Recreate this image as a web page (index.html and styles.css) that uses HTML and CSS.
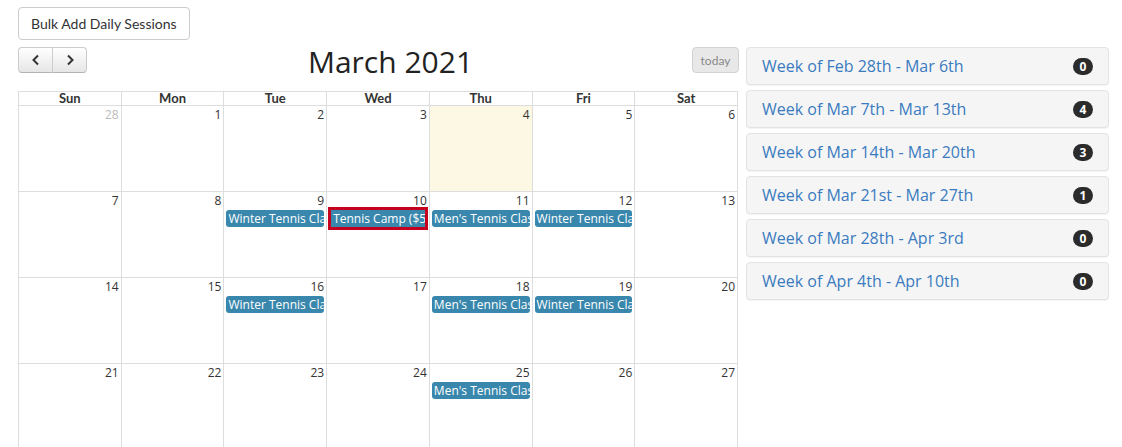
FILE: index.html
```html
<!DOCTYPE html>
<html lang="en">

<head>
    <meta charset="utf-8">
    <meta name="viewport" content="width=device-width, initial-scale=1.0">
    <title>Sessions</title>

    <link rel="stylesheet" href="styles.css">
</head>

<body>
    <div class="page">
        <button class="btn-bulk">Bulk Add Daily Sessions</button>

        <div class="layout">
            <section class="calendar">
                <div class="toolbar">
                    <div class="nav-group">
                        <button class="nav-btn" aria-label="prev">
                            <svg width="10" height="12" viewBox="0 0 10 12"><polyline points="7,1.5 2.5,6 7,10.5" fill="none" stroke="#333" stroke-width="2"/></svg>
                        </button>
                        <button class="nav-btn" aria-label="next">
                            <svg width="10" height="12" viewBox="0 0 10 12"><polyline points="3,1.5 7.5,6 3,10.5" fill="none" stroke="#333" stroke-width="2"/></svg>
                        </button>
                    </div>
                    <h2 class="title">March 2021</h2>
                    <button class="btn-today" disabled>today</button>
                </div>

                <div class="grid head">
                    <div>Sun</div><div>Mon</div><div>Tue</div><div>Wed</div><div>Thu</div><div>Fri</div><div>Sat</div>
                </div>

                <div class="grid days">
                    <div class="day other"><span class="num">28</span></div>
                    <div class="day"><span class="num">1</span></div>
                    <div class="day"><span class="num">2</span></div>
                    <div class="day"><span class="num">3</span></div>
                    <div class="day today"><span class="num">4</span></div>
                    <div class="day"><span class="num">5</span></div>
                    <div class="day"><span class="num">6</span></div>

                    <div class="day"><span class="num">7</span></div>
                    <div class="day"><span class="num">8</span></div>
                    <div class="day"><span class="num">9</span><a class="event">Winter Tennis Class</a></div>
                    <div class="day"><span class="num">10</span><a class="event picked">Tennis Camp ($50)</a></div>
                    <div class="day"><span class="num">11</span><a class="event">Men's Tennis Class</a></div>
                    <div class="day"><span class="num">12</span><a class="event">Winter Tennis Class</a></div>
                    <div class="day"><span class="num">13</span></div>

                    <div class="day"><span class="num">14</span></div>
                    <div class="day"><span class="num">15</span></div>
                    <div class="day"><span class="num">16</span><a class="event">Winter Tennis Class</a></div>
                    <div class="day"><span class="num">17</span></div>
                    <div class="day"><span class="num">18</span><a class="event">Men's Tennis Class</a></div>
                    <div class="day"><span class="num">19</span><a class="event">Winter Tennis Class</a></div>
                    <div class="day"><span class="num">20</span></div>

                    <div class="day"><span class="num">21</span></div>
                    <div class="day"><span class="num">22</span></div>
                    <div class="day"><span class="num">23</span></div>
                    <div class="day"><span class="num">24</span></div>
                    <div class="day"><span class="num">25</span><a class="event">Men's Tennis Class</a></div>
                    <div class="day"><span class="num">26</span></div>
                    <div class="day"><span class="num">27</span></div>
                </div>
            </section>

            <aside class="weeks">
                <div class="week"><a>Week of Feb 28th - Mar 6th</a><span class="badge">0</span></div>
                <div class="week"><a>Week of Mar 7th - Mar 13th</a><span class="badge">4</span></div>
                <div class="week"><a>Week of Mar 14th - Mar 20th</a><span class="badge">3</span></div>
                <div class="week"><a>Week of Mar 21st - Mar 27th</a><span class="badge">1</span></div>
                <div class="week"><a>Week of Mar 28th - Apr 3rd</a><span class="badge">0</span></div>
                <div class="week"><a>Week of Apr 4th - Apr 10th</a><span class="badge">0</span></div>
            </aside>
        </div>
    </div>
</body>

</html>
```

FILE: styles.css
```css
html {
    overflow: hidden;
}

body {
    margin: 0;
    font-family: "Open Sans", "Liberation Sans", sans-serif;
    color: #333;
    background: #fff;
}

.page {
    padding: 7px 13px 0 18px;
}

.btn-bulk {
    font-family: Lato, "Liberation Sans", sans-serif;
    font-size: 14px;
    color: #333;
    background: #fff;
    border: 1px solid #ccc;
    border-radius: 4px;
    height: 33px;
    padding: 0 12px;
}

.layout {
    display: grid;
    grid-template-columns: 720px 363px;
    column-gap: 8px;
    margin-top: 7px;
}

.toolbar {
    display: flex;
    align-items: flex-start;
    justify-content: space-between;
    height: 44px;
}

.nav-group {
    display: flex;
}

.nav-btn {
    width: 35px;
    height: 26px;
    padding: 0;
    border: 1px solid #ccc;
    border-bottom-color: #b3b3b3;
    background: linear-gradient(#fff, #e6e6e6);
    display: flex;
    align-items: center;
    justify-content: center;
}

.nav-btn:first-child {
    border-radius: 4px 0 0 4px;
}

.nav-btn:last-child {
    border-radius: 0 4px 4px 0;
    margin-left: -1px;
}

.title {
    margin: -3px 0 0 2px;
    font-size: 30px;
    font-weight: normal;
    color: #222;
    line-height: 36px;
}

.btn-today {
    font-family: Lato, "Liberation Sans", sans-serif;
    font-size: 12px;
    color: #888;
    background: #e8e8e8;
    border: 1px solid #d2d2d2;
    border-radius: 4px;
    width: 47px;
    height: 26px;
    padding: 0;
    margin-right: -1px;
}

.grid {
    display: grid;
    grid-template-columns: repeat(7, 1fr);
    border-left: 1px solid #ddd;
}

.head {
    border-top: 1px solid #ddd;
    font-family: Lato, "Liberation Sans", sans-serif;
    font-weight: bold;
    font-size: 13px;
    line-height: 13px;
    text-align: center;
}

.head div {
    border-right: 1px solid #ddd;
    border-bottom: 1px solid #ddd;
    height: 13px;
}

.day {
    height: 85px;
    border-right: 1px solid #ddd;
    border-bottom: 1px solid #ddd;
    display: flex;
    flex-direction: column;
    min-width: 0;
}

.day.today {
    background: #fcf8e3;
}

.num {
    font-size: 12px;
    line-height: 16px;
    text-align: right;
    padding: 1px 2px 0 0;
}

.day.other .num {
    color: #bbb;
}

.event {
    display: block;
    margin: 1px 2px 0;
    padding: 0 2px;
    background: #3a87ad;
    color: #fff;
    font-size: 12px;
    line-height: 17px;
    border-radius: 3px;
    white-space: nowrap;
    overflow: hidden;
}

.event.picked {
    border-radius: 0;
    outline: 3px solid #c6001f;
    margin: 1px 4px 0 4px;
}

.weeks {
    display: flex;
    flex-direction: column;
    gap: 5px;
}

.week {
    height: 36px;
    background: #f5f5f5;
    border: 1px solid #e3e3e3;
    border-radius: 4px;
    box-shadow: 0 1px 1px rgba(0, 0, 0, 0.05);
    display: flex;
    align-items: center;
    justify-content: space-between;
    padding: 0 15px;
}

.week a {
    font-size: 16px;
    color: #3a7bbf;
}

.badge {
    background: #2b2b2b;
    color: #fff;
    font-size: 12px;
    font-weight: bold;
    border-radius: 9px;
    min-width: 20px;
    height: 17px;
    line-height: 17px;
    text-align: center;
}
```
